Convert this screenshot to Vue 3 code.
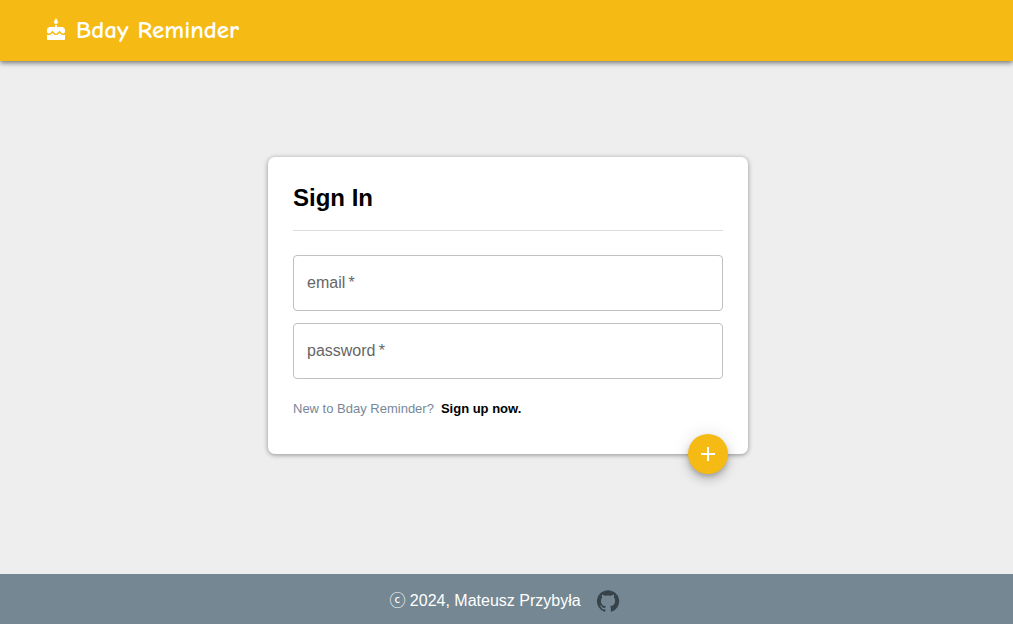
<script setup>
import { ref } from 'vue'

const email = ref('')
const password = ref('')
</script>

<template>
  <div class="page">
    <header class="topbar">
      <a class="brand" href="#">
        <svg class="icon" viewBox="0 0 24 24" aria-hidden="true">
          <path d="M12 6c1.11 0 2-.9 2-2 0-.38-.1-.73-.29-1.03L12 0l-1.71 2.97c-.19.3-.29.65-.29 1.03 0 1.1.9 2 2 2zm4.6 9.99l-1.07-1.07-1.08 1.07c-1.3 1.3-3.58 1.31-4.89 0l-1.07-1.07-1.09 1.07C6.75 16.64 5.88 17 4.96 17c-.73 0-1.4-.23-1.96-.61V21c0 .55.45 1 1 1h16c.55 0 1-.45 1-1v-4.61c-.56.38-1.23.61-1.96.61-.92 0-1.79-.36-2.44-1.01zM18 9h-5V7h-2v2H6c-1.66 0-3 1.34-3 3v1.54c0 1.08.88 1.96 1.96 1.96.52 0 1.02-.2 1.38-.57l2.14-2.13 2.13 2.13c.74.74 2.03.74 2.77 0l2.14-2.13 2.13 2.13c.37.37.86.57 1.38.57 1.08 0 1.96-.88 1.96-1.96V12C21 10.34 19.66 9 18 9z" />
        </svg>
        <span class="brand-name">Bday Reminder</span>
      </a>
    </header>

    <main class="content">
      <form class="card" @submit.prevent>
        <h1 class="title">Sign In</h1>
        <div class="fields">
          <div class="field">
            <input id="email" v-model="email" type="email" required />
            <label v-show="!email" for="email">email&thinsp;*</label>
          </div>
          <div class="field">
            <input id="password" v-model="password" type="password" required />
            <label v-show="!password" for="password">password&thinsp;*</label>
          </div>
        </div>
        <p class="hint"><span>New to Bday Reminder?</span> <a href="#">Sign up now.</a></p>
        <button class="fab" type="submit" aria-label="Sign in">
          <svg class="icon" viewBox="0 0 24 24" aria-hidden="true">
            <path d="M19 13h-6v6h-2v-6H5v-2h6V5h2v6h6v2z" />
          </svg>
        </button>
      </form>
    </main>

    <footer class="footer">
      <span>ⓒ 2024, Mateusz Przybyła</span>
      <a class="github" href="#" aria-label="GitHub">
        <svg class="icon" viewBox="0 0 24 24" aria-hidden="true">
          <path d="M12 1.27a11 11 0 00-3.48 21.46c.55.09.73-.28.73-.55v-1.84c-3.03.64-3.67-1.46-3.67-1.46-.55-1.29-1.28-1.65-1.28-1.65-.92-.65.1-.65.1-.65 1.1 0 1.73 1.1 1.73 1.1.92 1.65 2.57 1.2 3.21.92a2 2 0 01.64-1.47c-2.47-.27-5.04-1.19-5.04-5.5 0-1.1.46-2.1 1.2-2.84a3.76 3.76 0 010-2.93s.91-.28 3.11 1.1c1.8-.49 3.7-.49 5.5 0 2.1-1.38 3.02-1.1 3.02-1.1a3.76 3.76 0 01.1 2.93c.83.74 1.2 1.74 1.2 2.94 0 4.21-2.57 5.13-5.04 5.4.45.37.82.92.82 2.02v3.03c0 .27.1.64.73.55A11 11 0 0012 1.27" />
        </svg>
      </a>
    </footer>
  </div>
</template>

<style>
body {
  margin: 0;
}
</style>

<style scoped>
.page {
  box-sizing: border-box;
  min-height: 100vh;
  display: flex;
  flex-direction: column;
  background: #eee;
  color: #000;
  font: 16px/24px "Liberation Sans", Arial, "Noto Sans CJK JP", sans-serif;
}

.page * {
  box-sizing: border-box;
}

.icon {
  display: block;
  width: 24px;
  height: 24px;
  fill: currentColor;
}

.topbar {
  display: flex;
  padding: 12px 44px 13px;
  background: #f5ba13;
  box-shadow: 0 2px 5px rgba(0, 0, 0, 0.5);
}

.brand {
  display: flex;
  align-items: center;
  gap: 8px;
  color: #fff;
  text-decoration: none;
}

.brand-name {
  font: bold 25px/36px "Comic Sans MS", "Comic Neue", cursive;
}

.content {
  flex: 1;
  display: flex;
  align-items: flex-start;
  justify-content: center;
  padding: 96px 0 24px 3px;
}

.card {
  position: relative;
  width: 480px;
  max-width: 100%;
  padding: 25px 25px 33px;
  background: #fff;
  border-radius: 7px;
  box-shadow: 0 1px 5px rgba(0, 0, 0, 0.4);
}

.title {
  margin: 0;
  padding-bottom: 16px;
  border-bottom: 1px solid #ddd;
  font-size: 24px;
  line-height: 32px;
}

.fields {
  display: grid;
  gap: 12px;
  margin: 24px 0 18px;
}

.field {
  position: relative;
}

.field input {
  display: block;
  width: 100%;
  height: 56px;
  padding: 0 13px;
  border: 1px solid #c0c0c0;
  border-radius: 4px;
  background: transparent;
  font: inherit;
}

.field input:focus {
  outline: 1px solid #f5ba13;
  border-color: #f5ba13;
}

.field label {
  position: absolute;
  top: 16px;
  left: 14px;
  color: #666;
  pointer-events: none;
}

.hint {
  display: flex;
  flex-wrap: wrap;
  column-gap: 7px;
  margin: 0;
  color: #778899;
  font-size: 13px;
}

.hint a {
  color: #000;
  font-weight: bold;
  text-decoration: none;
}

.fab {
  position: absolute;
  right: 20px;
  bottom: -20px;
  display: grid;
  place-items: center;
  width: 40px;
  height: 40px;
  padding: 0;
  border: 0;
  border-radius: 50%;
  background: #f5ba13;
  color: #fff;
  cursor: pointer;
  box-shadow: 0 3px 5px -1px rgba(0, 0, 0, 0.2), 0 6px 10px rgba(0, 0, 0, 0.14), 0 1px 18px rgba(0, 0, 0, 0.12);
}

.footer {
  display: flex;
  align-items: center;
  justify-content: center;
  gap: 15px;
  min-height: 50px;
  padding: 4px 4px 0 0;
  background: #748793;
  color: #fff;
}

.github {
  color: #36434b;
}
</style>
